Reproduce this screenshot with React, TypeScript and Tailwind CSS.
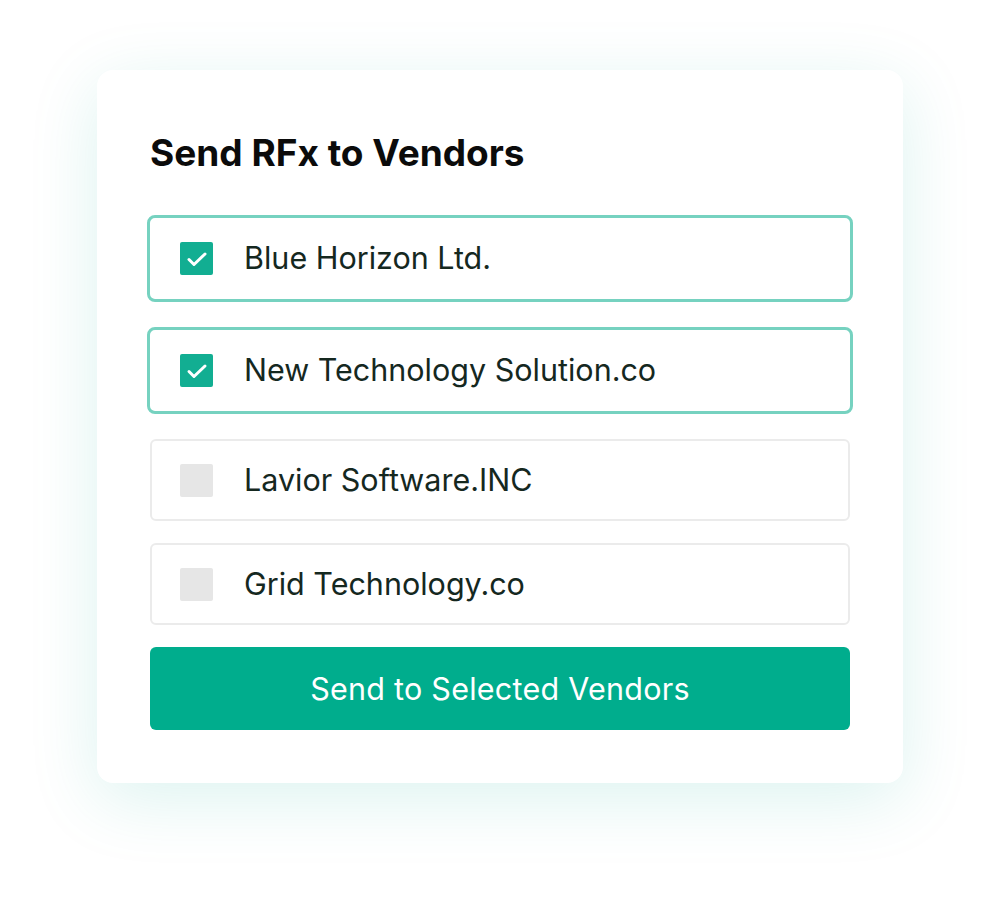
import { useState } from "react";

interface Vendor {
  name: string;
  selected: boolean;
}

const initialVendors: Vendor[] = [
  { name: "Blue Horizon Ltd.", selected: true },
  { name: "New Technology Solution.co", selected: true },
  { name: "Lavior Software.INC", selected: false },
  { name: "Grid Technology.co", selected: false },
];

function CheckBox({ checked }: { checked: boolean }) {
  if (!checked) {
    return <span className="block w-[33px] h-[33px] rounded-[2px] bg-[#e6e6e6] shrink-0" />;
  }
  return (
    <span className="flex items-center justify-center w-[33px] h-[33px] rounded-[2px] bg-[#12ae92] shrink-0">
      <svg width="26" height="26" viewBox="0 0 26 26" fill="none">
        <path
          d="M5 13.5l5 5L21 8"
          stroke="white"
          strokeWidth="3"
          strokeLinecap="round"
          strokeLinejoin="round"
        />
      </svg>
    </span>
  );
}

export default function App() {
  const [vendors, setVendors] = useState(initialVendors);

  const toggle = (index: number) =>
    setVendors((list) =>
      list.map((v, i) => (i === index ? { ...v, selected: !v.selected } : v))
    );

  return (
    <div
      className="min-h-[907px] w-full bg-white pt-[70px] flex justify-center"
      style={{ fontFamily: "Inter, 'Noto Sans', sans-serif" }}
    >
      <section className="w-[806px] h-[713px] bg-white rounded-[16px] shadow-[0_16px_70px_rgba(0,170,150,0.14)] px-[53px] pt-[61px]">
        <h2 className="text-[37px] leading-[44px] font-bold text-[#0b0b0b]">
          Send RFx to Vendors
        </h2>

        <div className="mt-[40px] flex flex-col">
          {vendors.map((vendor, index) => (
            <button
              key={vendor.name}
              onClick={() => toggle(index)}
              className={
                vendor.selected
                  ? "-mx-[3px] h-[87px] mb-[25px] rounded-[8px] border-[3px] border-[#76d2c0] bg-white flex items-center pl-[30px] text-left"
                  : "h-[82px] mb-[22px] rounded-[6px] border-2 border-[#ebebeb] bg-white flex items-center pl-[28px] text-left"
              }
            >
              <CheckBox checked={vendor.selected} />
              <span className="ml-[31px] text-[30.5px] leading-none text-[#15281f]">
                {vendor.name}
              </span>
            </button>
          ))}

          <button className="h-[83px] rounded-[6px] bg-[#00ad8d] text-white text-[30.5px] tracking-[0.25px] font-normal">
            Send to Selected Vendors
          </button>
        </div>
      </section>
    </div>
  );
}
